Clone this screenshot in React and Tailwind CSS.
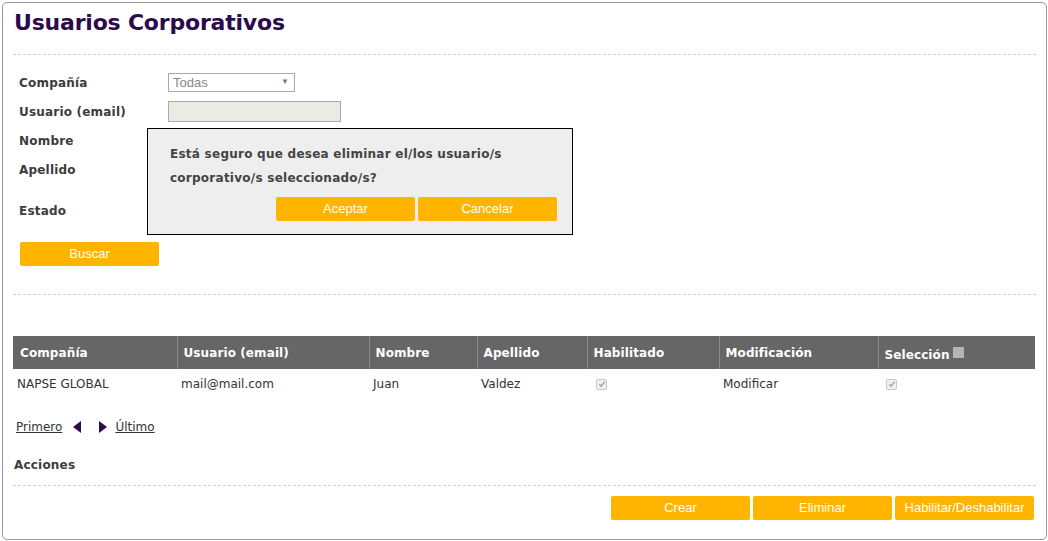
import React from 'react';

const labelCls = "w-[149px] shrink-0 text-[12px] font-bold tracking-[0.2px] text-[#3c3c3c]";
const btnCls = "h-[24px] w-[139px] rounded-[2px] bg-[#ffb400] text-white text-[13px] font-['Liberation_Sans',Arial,sans-serif] flex items-center justify-center";

const CheckDisabled = () => (
  <span className="inline-flex h-[11px] w-[11px] items-center justify-center rounded-[2px] border border-[#c8c8c8] bg-[#f0f0f0]">
    <svg viewBox="0 0 10 10" className="h-[8px] w-[8px]">
      <path d="M1.5 5.2 L3.8 7.6 L8.5 2.2" fill="none" stroke="#a8a8a8" strokeWidth="1.8" />
    </svg>
  </span>
);

const FormRow = ({ label, children, className = "" }) => (
  <div className={"flex h-[29px] items-center " + className}>
    <div className={labelCls}>{label}</div>
    {children}
  </div>
);

const columns = [
  { name: 'Compañía', w: 'w-[164px]' },
  { name: 'Usuario (email)', w: 'w-[192px]' },
  { name: 'Nombre', w: 'w-[108px]' },
  { name: 'Apellido', w: 'w-[110px]' },
  { name: 'Habilitado', w: 'w-[132px]' },
  { name: 'Modificación', w: 'w-[159px]' },
];

export default function App() {
  return (
    <div className="bg-white p-[2px] font-['DejaVu_Sans',Verdana,sans-serif] text-[#333]">
      <div className="relative h-[538px] w-[1045px] rounded-[5px] border border-[#999] px-[10px]">
        {/* titulo */}
        <div className="h-[52px] border-b border-dashed border-[#cfcfcf] pt-[7px]">
          <h1 className="pl-[1px] text-[22px] leading-[26px] font-bold tracking-[-0.2px] text-[#2c0a4b]">
            Usuarios Corporativos
          </h1>
        </div>

        {/* filtros */}
        <div className="pl-[6px] pt-[13px]">
          <FormRow label="Compañía">
            <div className="relative flex h-[19px] w-[127px] items-center border border-[#a9a9a9] bg-white pl-[4px] text-[13px] text-[#888] font-['Liberation_Sans',Arial,sans-serif]">
              Todas
              <span className="absolute right-[5px] top-[2px] text-[8px] text-[#777]">▼</span>
            </div>
          </FormRow>
          <FormRow label="Usuario (email)">
            <div className="h-[21px] w-[173px] border border-[#a9a9a9] bg-[#ebebe4]" />
          </FormRow>
          <FormRow label="Nombre">
            <div className="h-[21px] w-[173px] border border-[#a9a9a9] bg-white" />
          </FormRow>
          <FormRow label="Apellido">
            <div className="h-[21px] w-[173px] border border-[#a9a9a9] bg-white" />
          </FormRow>
          <FormRow label="Estado" className="mt-[12px]">
            <div className="h-[19px] w-[127px] border border-[#a9a9a9] bg-white" />
          </FormRow>
          <div className="mt-[17px] pl-[1px]">
            <button className={btnCls}>Buscar</button>
          </div>
        </div>

        <div className="mt-[28px] border-t border-dashed border-[#cfcfcf]" />

        {/* tabla */}
        <table className="mt-[41px] w-[1022px] table-fixed border-collapse text-[12px]">
          <thead>
            <tr className="h-[33px] bg-[#666] text-left text-white">
              {columns.map((c, i) => (
                <th
                  key={c.name}
                  className={c.w + " px-[6px] font-bold tracking-[0.1px] " + (i > 0 ? "border-l border-[#8a8a8a]" : "pl-[7px]")}
                >
                  {c.name}
                </th>
              ))}
              <th className="border-l border-[#8a8a8a] px-[6px] pt-[4px] font-bold tracking-[0.1px]">
                <span className="inline-flex items-center gap-[3px]">
                  Selección
                  <span className="mb-[4px] inline-block h-[11px] w-[11px] bg-[#b4b4b4]" />
                </span>
              </th>
            </tr>
          </thead>
          <tbody>
            <tr className="h-[28px] text-[#333]">
              <td className="pl-[4px] pt-[2px]">NAPSE GLOBAL</td>
              <td className="pl-[4px] pt-[2px]">mail@mail.com</td>
              <td className="pl-[4px] pt-[2px]">Juan</td>
              <td className="pl-[4px] pt-[2px]">Valdez</td>
              <td className="pl-[9px] pt-[2px]"><CheckDisabled /></td>
              <td className="pl-[4px] pt-[2px]">Modificar</td>
              <td className="pl-[8px] pt-[2px]"><CheckDisabled /></td>
            </tr>
          </tbody>
        </table>

        {/* paginado */}
        <div className="mt-[21px] flex h-[18px] items-center pl-[3px] text-[12px] text-[#333]">
          <a className="underline">Primero</a>
          <svg viewBox="0 0 8 12" className="ml-[11px] h-[12px] w-[8px]">
            <path d="M8 0 L0 6 L8 12 Z" fill="#2c0a4b" />
          </svg>
          <svg viewBox="0 0 8 12" className="ml-[18px] h-[12px] w-[8px]">
            <path d="M0 0 L8 6 L0 12 Z" fill="#2c0a4b" />
          </svg>
          <a className="ml-[8px] underline">Último</a>
        </div>

        <div className="mt-[20px] flex h-[18px] items-center pl-[1px] text-[12px] font-bold tracking-[0.2px] text-[#3c3c3c]">
          Acciones
        </div>

        <div className="mt-[11px] border-t border-dashed border-[#cfcfcf]" />

        <div className="mt-[10px] mr-[2px] flex justify-end gap-[3px]">
          <button className={btnCls}>Crear</button>
          <button className={btnCls}>Eliminar</button>
          <button className={btnCls}>Habilitar/Deshabilitar</button>
        </div>

        {/* dialogo de confirmacion */}
        <div className="absolute left-[144px] top-[125px] h-[107px] w-[426px] border border-black bg-[#eeeeee] pl-[22px] pr-[15px] pt-[13px]">
          <p className="text-[12px] leading-[24px] font-bold tracking-[0.25px] text-[#444]">
            Está seguro que desea eliminar el/los usuario/s
            <br />
            corporativo/s seleccionado/s?
          </p>
          <div className="mt-[7px] flex justify-end gap-[3px]">
            <button className={btnCls}>Aceptar</button>
            <button className={btnCls}>Cancelar</button>
          </div>
        </div>
      </div>
    </div>
  );
}
